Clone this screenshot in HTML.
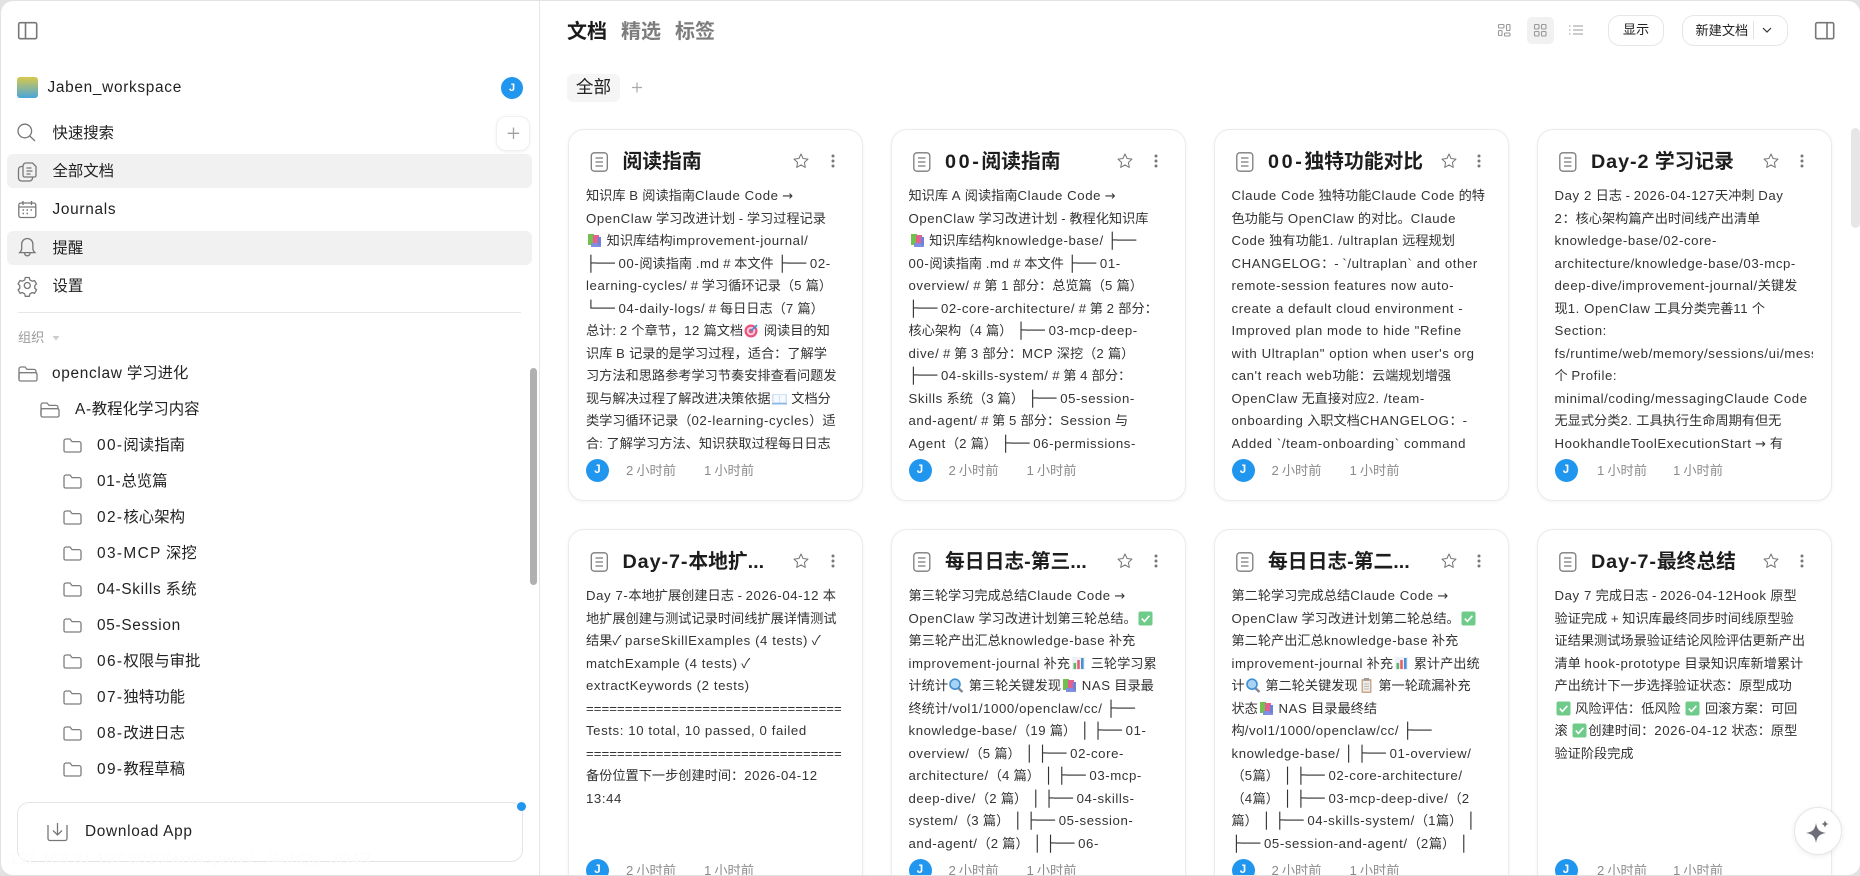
<!DOCTYPE html>
<html lang="zh"><head><meta charset="utf-8"><title>Jaben_workspace</title>
<style>
html,body{margin:0;padding:0;width:1860px;height:876px;overflow:hidden;background:#e2e2e2}
*{box-sizing:border-box}
body{font-family:"Liberation Sans","Noto Sans CJK SC",sans-serif;color:#1f1f1f}
#w{position:absolute;left:1px;top:1px;width:1859px;height:874px;background:#fff;border-radius:12px;overflow:hidden}
.a{position:absolute;white-space:nowrap}
b{font-weight:inherit;letter-spacing:.045em}
b.d{letter-spacing:.09em}
i{font-style:normal;font-family:"Liberation Mono","DejaVu Sans Mono",monospace;font-size:16px}
em{font-style:normal;font-family:"DejaVu Sans",sans-serif;font-size:13px}
.n{left:51.5px;font-size:15.4px;height:24px;line-height:24px;color:#222}
.bg{position:absolute;left:6px;width:525px;background:#f1f1f1;border-radius:6px}
.tr{font-size:15.4px;height:24px;line-height:24px;color:#222}
.tab{top:17px;font-size:20px;font-weight:700;line-height:28px;color:#7d7d7d}
.c{position:absolute;width:295px;height:372px;background:#fff;border:1px solid #ebebeb;border-radius:16px;box-shadow:0 1px 4px rgba(0,0,0,.05)}
.h{position:absolute;left:53.5px;top:18.5px;font-size:19.8px;font-weight:700;line-height:28px;white-space:nowrap;color:#1d1d1d}
.h b.z{letter-spacing:2.6px}
.t{position:absolute;left:17px;top:55.5px;width:258.5px;overflow:hidden;font-size:13.2px;color:#333}
.t p{margin:0;height:22.5px;line-height:22.5px;white-space:nowrap}
.av{position:absolute;left:17px;top:329.5px;width:23px;height:23px;border-radius:50%;background:#2196ee;color:#fff;font-size:11.5px;font-weight:700;text-align:center;line-height:23px}
.m{position:absolute;font-size:13.2px;color:#8c8c8c;line-height:20px;white-space:nowrap;top:331.5px}
.m b{letter-spacing:3px}
.e{display:inline-block;width:17px;height:15px;vertical-align:-3px}
.bt{position:absolute;border:1px solid #e6e6e6;border-radius:12px;background:#fff;font-size:13.2px;text-align:center;color:#222}
</style></head><body>
<svg width="0" height="0" style="position:absolute">
<defs>
<symbol id="books" viewBox="0 0 17 15"><rect x="2" y="1" width="6" height="11" fill="#72c04e"/><rect x="7" y="2" width="6" height="10" fill="#e4608f"/><rect x="5" y="10" width="10" height="4" fill="#7f8ee0"/><rect x="12" y="4" width="3" height="8" fill="#6f80d8"/></symbol>
<symbol id="target" viewBox="0 0 17 15"><circle cx="8" cy="8" r="6.5" fill="#e8557f"/><circle cx="8" cy="8" r="4.3" fill="#f6d0dc"/><circle cx="8" cy="8" r="2.3" fill="#e8557f"/><path d="M8 8L14 2" stroke="#4a90d9" stroke-width="1.6"/></symbol>
<symbol id="obook" viewBox="0 0 17 15"><path d="M1 3h7l.5 1 .5-1h7v10H1z" fill="#cfe2f5"/><path d="M2.5 4h5.5v7H2.5zM9 4h5.5v7H9z" fill="#f6f9fd"/><rect x="1" y="12" width="15" height="1.5" fill="#8ab8e6"/></symbol>
<symbol id="check" viewBox="0 0 17 15"><rect x="1.5" y="0.5" width="14" height="14" rx="2" fill="#6ecb8a"/><path d="M4.8 7.6l2.6 2.8 5-5.6" fill="none" stroke="#fff" stroke-width="1.6"/></symbol>
<symbol id="chart" viewBox="0 0 17 15"><rect x="2" y="1" width="13" height="13" fill="#eef1f5"/><rect x="3.5" y="7" width="2.6" height="6" fill="#5fb56b"/><rect x="7.2" y="4" width="2.6" height="9" fill="#e4606d"/><rect x="11" y="2" width="2.6" height="11" fill="#4a90d9"/></symbol>
<symbol id="mag" viewBox="0 0 17 15"><path d="M9 9l5.5 5" stroke="#7c8791" stroke-width="2.4"/><circle cx="7" cy="6.2" r="5" fill="#a9d3f2" stroke="#3f8fd2" stroke-width="1.6"/></symbol>
<symbol id="clip" viewBox="0 0 17 15"><rect x="3.5" y="1" width="10" height="14" rx="1" fill="#c9a98a"/><rect x="5" y="3" width="7" height="10.5" fill="#f1eee9"/><rect x="6" y="0" width="5" height="2.5" fill="#9a9aa2"/><path d="M6 6h5M6 8.5h5M6 11h5" stroke="#b7b7b7"/></symbol>
<symbol id="fc" viewBox="0 0 19 15"><path d="M1 3a2 2 0 0 1 2-2h4l2 2.6h7a2 2 0 0 1 2 2v6.9a1.5 1.5 0 0 1-1.5 1.5h-14A1.5 1.5 0 0 1 1 12.5z" fill="none" stroke="#7d7d7d" stroke-width="1.3"/></symbol>
<symbol id="fo" viewBox="0 0 20 16"><path d="M1 13V3a2 2 0 0 1 2-2h4l2 2.4h7a2 2 0 0 1 2 2v1" fill="none" stroke="#7d7d7d" stroke-width="1.3"/><path d="M2.5 15h15a1.5 1.5 0 0 0 1.5-1.5V8.2a1.5 1.5 0 0 0-1.5-1.5h-15A1.5 1.5 0 0 0 1 8.2v5.3A1.5 1.5 0 0 0 2.5 15z" fill="none" stroke="#7d7d7d" stroke-width="1.3"/></symbol>
<symbol id="doc" viewBox="0 0 18 20"><rect x=".8" y=".8" width="16" height="18.4" rx="3" fill="none" stroke="#7b7b7b" stroke-width="1.3"/><path d="M5 6h7.500M5 10h7.500M5 14h7.500" stroke="#7b7b7b" stroke-width="1.3"/></symbol>
<symbol id="star" viewBox="0 0 16 16"><path d="M8 1l2.1 4.5 4.9.6-3.6 3.4.9 4.9L8 11.9l-4.3 2.5.9-4.9L1 6.1l4.900-.6z" fill="none" stroke="#757575" stroke-width="1" stroke-linejoin="round"/></symbol>
<symbol id="dots" viewBox="0 0 4 14"><circle cx="2" cy="2" r=".85" fill="#8a8a8a"/><circle cx="2" cy="7" r=".85" fill="#8a8a8a"/><circle cx="2" cy="12" r=".85" fill="#8a8a8a"/></symbol>
</defs></svg>

<div id="w">
<!-- sidebar -->
<div style="position:absolute;left:538px;top:-1px;width:1px;height:876px;background:#e6e6e6"></div>
<div style="position:absolute;left:16px;top:76px;width:21px;height:21px;border-radius:3px;background:linear-gradient(#d8c94a,#49a6dd)"></div>
<div class="a" style="left:46.5px;top:75px;font-size:15.4px;line-height:24px;color:#1f1f1f"><b>Jaben_workspace</b></div>
<div class="av" style="left:500px;top:75.5px;width:22px;height:22px;line-height:22px;font-size:11px">J</div>
<div class="bg" style="top:153px;height:34px"></div>
<div class="bg" style="top:230px;height:33.5px"></div>
<div class="a n" style="top:121px">快速搜索</div>
<div class="a n" style="top:159px">全部文档</div>
<div class="a n" style="top:197px"><b>Journals</b></div>
<div class="a n" style="top:236px">提醒</div>
<div class="a n" style="top:274px">设置</div>
<div style="position:absolute;left:495px;top:115px;width:34px;height:35px;background:#fff;border:1px solid #f0f0f0;border-radius:10px;box-shadow:0 1px 3px rgba(0,0,0,.06)"></div>
<div style="position:absolute;left:17px;top:311px;width:503px;height:1px;background:#e6e6e6"></div>
<div class="a" style="left:17px;top:327px;font-size:13.2px;line-height:20px;color:#9b9b9b">组织</div>
<div class="a tr" style="left:51px;top:361px"><b>openclaw</b> 学习进化</div>
<div class="a tr" style="left:74px;top:397px"><b>A-</b>教程化学习内容</div>
<div class="a tr" style="left:96px;top:433px"><b class="d">00-</b>阅读指南</div>
<div class="a tr" style="left:96px;top:469px"><b>01-</b>总览篇</div>
<div class="a tr" style="left:96px;top:505px"><b class="d">02-</b>核心架构</div>
<div class="a tr" style="left:96px;top:541px"><b class="d">03-MCP</b> 深挖</div>
<div class="a tr" style="left:96px;top:577px"><b>04-Skills</b> 系统</div>
<div class="a tr" style="left:96px;top:613px"><b>05-Session</b></div>
<div class="a tr" style="left:96px;top:649px"><b class="d">06-</b>权限与审批</div>
<div class="a tr" style="left:96px;top:685px"><b class="d">07-</b>独特功能</div>
<div class="a tr" style="left:96px;top:721px"><b class="d">08-</b>改进日志</div>
<div class="a tr" style="left:96px;top:757px"><b class="d">09-</b>教程草稿</div>
<div style="position:absolute;left:529px;top:367px;width:7px;height:217px;background:#b0b0b0;border-radius:4px"></div>
<div style="position:absolute;left:15.5px;top:801px;width:506px;height:60px;background:#fff;border:1px solid #e4e4e4;border-radius:12px"></div>
<div style="position:absolute;left:515.5px;top:800.5px;width:9px;height:9px;background:#2196ee;border-radius:50%"></div>
<div class="a" style="left:84px;top:819px;font-size:15.4px;line-height:24px;color:#222"><b>Download App</b></div>
<div class="a" style="left:8px;top:849px;font-size:16.5px;line-height:18px;color:#fcfcfc">192.168.31.197:3010/workspace/.../4qhQg_JD4R</div>

<!-- header -->
<div class="a tab" style="left:566px;color:#1a1a1a">文档</div>
<div class="a tab" style="left:620px">精选</div>
<div class="a tab" style="left:674px">标签</div>
<div style="position:absolute;left:566px;top:73px;width:53px;height:28px;background:#f5f5f5;border-radius:6px;font-size:17.6px;line-height:27px;text-align:center;color:#222">全部</div>
<div style="position:absolute;left:1526px;top:16px;width:27px;height:27px;background:#f1f1f1;border-radius:5px"></div>
<div class="bt" style="left:1607px;top:14px;width:56px;height:31px;line-height:28px">显示</div>
<div class="bt" style="left:1681px;top:14px;width:106px;height:31px;line-height:30px;text-align:left;padding-left:12.5px">新建文档</div>

<!-- cards row 1 -->
<div class="c" style="left:567px;top:127.5px">
<div class="h">阅读指南</div>
<div class="t" style="height:270px">
<p>知识库 <b>B</b> 阅读指南<b>Claude Code</b> <em>→</em></p>
<p><b>OpenClaw</b> 学习改进计划 - 学习过程记录</p>
<p><svg class="e"><use href="#books"/></svg> 知识库结构<b>improvement-journal/</b></p>
<p><i>├──</i> <b>00-</b>阅读指南 <b>.md</b> # 本文件 <i>├──</i> <b>02-</b></p>
<p><b>learning-cycles/</b> # 学习循环记录（<b>5</b> 篇）</p>
<p><i>└──</i> <b>04-daily-logs/</b> # 每日日志（<b>7</b> 篇）</p>
<p>总计: <b>2</b> 个章节，<b>12</b> 篇文档<svg class="e"><use href="#target"/></svg> 阅读目的知</p>
<p>识库 <b>B</b> 记录的是学习过程，适合：了解学</p>
<p>习方法和思路参考学习节奏安排查看问题发</p>
<p>现与解决过程了解改进决策依据<svg class="e"><use href="#obook"/></svg> 文档分</p>
<p>类学习循环记录（<b>02-learning-cycles</b>）适</p>
<p>合: 了解学习方法、知识获取过程每日日志</p>
</div>
<div class="av">J</div><div class="m" style="left:57px"><b>2</b>小时前</div><div class="m" style="left:135px"><b>1</b>小时前</div>
</div>

<div class="c" style="left:889.5px;top:127.5px">
<div class="h"><b class="z">00-</b>阅读指南</div>
<div class="t" style="height:270px">
<p>知识库 <b>A</b> 阅读指南<b>Claude Code</b> <em>→</em></p>
<p><b>OpenClaw</b> 学习改进计划 - 教程化知识库</p>
<p><svg class="e"><use href="#books"/></svg> 知识库结构<b>knowledge-base/</b> <i>├──</i></p>
<p><b>00-</b>阅读指南 <b>.md</b> # 本文件 <i>├──</i> <b>01-</b></p>
<p><b>overview/</b> # 第 <b>1</b> 部分：总览篇（<b>5</b> 篇）</p>
<p><i>├──</i> <b>02-core-architecture/</b> # 第 <b>2</b> 部分：</p>
<p>核心架构（<b>4</b> 篇） <i>├──</i> <b>03-mcp-deep-</b></p>
<p><b>dive/</b> # 第 <b>3</b> 部分：<b>MCP</b> 深挖（<b>2</b> 篇）</p>
<p><i>├──</i> <b>04-skills-system/</b> # 第 <b>4</b> 部分：</p>
<p><b>Skills</b> 系统（<b>3</b> 篇） <i>├──</i> <b>05-session-</b></p>
<p><b>and-agent/</b> # 第 <b>5</b> 部分：<b>Session</b> 与</p>
<p><b>Agent</b>（<b>2</b> 篇） <i>├──</i> <b>06-permissions-</b></p>
</div>
<div class="av">J</div><div class="m" style="left:57px"><b>2</b>小时前</div><div class="m" style="left:135px"><b>1</b>小时前</div>
</div>

<div class="c" style="left:1212.5px;top:127.5px">
<div class="h"><b class="z">00-</b>独特功能对比</div>
<div class="t" style="height:270px">
<p><b>Claude Code</b> 独特功能<b>Claude Code</b> 的特</p>
<p>色功能与 <b>OpenClaw</b> 的对比。<b>Claude</b></p>
<p><b>Code</b> 独有功能<b>1. /ultraplan</b> 远程规划</p>
<p><b>CHANGELOG</b>：- <b>`/ultraplan` and other</b></p>
<p><b>remote-session features now auto-</b></p>
<p><b>create a default cloud environment -</b></p>
<p><b>Improved plan mode to hide "Refine</b></p>
<p><b>with Ultraplan" option when user's org</b></p>
<p><b>can't reach web</b>功能：云端规划增强</p>
<p><b>OpenClaw</b> 无直接对应<b>2. /team-</b></p>
<p><b>onboarding</b> 入职文档<b>CHANGELOG</b>：-</p>
<p><b>Added `/team-onboarding` command</b></p>
</div>
<div class="av">J</div><div class="m" style="left:57px"><b>2</b>小时前</div><div class="m" style="left:135px"><b>1</b>小时前</div>
</div>

<div class="c" style="left:1535.5px;top:127.5px">
<div class="h"><b>Day-2</b> 学习记录</div>
<div class="t" style="height:270px">
<p><b>Day 2</b> 日志 - <b>2026-04-127</b>天冲刺 <b>Day</b></p>
<p><b>2</b>：核心架构篇产出时间线产出清单</p>
<p><b>knowledge-base/02-core-</b></p>
<p><b>architecture/knowledge-base/03-mcp-</b></p>
<p><b>deep-dive/improvement-journal/</b>关键发</p>
<p>现<b>1. OpenClaw</b> 工具分类完善<b>11</b> 个</p>
<p><b>Section:</b></p>
<p><b>fs/runtime/web/memory/sessions/ui/messaging</b></p>
<p>个 <b>Profile:</b></p>
<p><b>minimal/coding/messagingClaude Code</b></p>
<p>无显式分类<b>2.</b> 工具执行生命周期有但无</p>
<p><b>HookhandleToolExecutionStart</b> <em>→</em> 有</p>
</div>
<div class="av">J</div><div class="m" style="left:59.5px"><b>1</b>小时前</div><div class="m" style="left:135.5px"><b>1</b>小时前</div>
</div>

<!-- cards row 2 -->
<div class="c" style="left:567px;top:527.5px">
<div class="h"><b>Day-7-</b>本地扩...</div>
<div class="t" style="height:270px">
<p><b>Day 7-</b>本地扩展创建日志 - <b>2026-04-12</b> 本</p>
<p>地扩展创建与测试记录时间线扩展详情测试</p>
<p>结果✓ <b>parseSkillExamples (4 tests)</b> ✓</p>
<p><b>matchExample (4 tests)</b> ✓</p>
<p><b>extractKeywords (2 tests)</b></p>
<p style="letter-spacing:.05px">=================================</p>
<p><b>Tests: 10 total, 10 passed, 0 failed</b></p>
<p style="letter-spacing:.05px">=================================</p>
<p>备份位置下一步创建时间：<b>2026-04-12</b></p>
<p><b>13:44</b></p>
</div>
<div class="av">J</div><div class="m" style="left:57px"><b>2</b>小时前</div><div class="m" style="left:135px"><b>1</b>小时前</div>
</div>

<div class="c" style="left:889.5px;top:527.5px">
<div class="h">每日日志-第三...</div>
<div class="t" style="height:270px">
<p>第三轮学习完成总结<b>Claude Code</b> <em>→</em></p>
<p><b>OpenClaw</b> 学习改进计划第三轮总结。<svg class="e"><use href="#check"/></svg></p>
<p>第三轮产出汇总<b>knowledge-base</b> 补充</p>
<p><b>improvement-journal</b> 补充<svg class="e"><use href="#chart"/></svg> 三轮学习累</p>
<p>计统计<svg class="e"><use href="#mag"/></svg> 第三轮关键发现<svg class="e"><use href="#books"/></svg> <b>NAS</b> 目录最</p>
<p>终统计<b>/vol1/1000/openclaw/cc/</b> <i>├──</i></p>
<p><b>knowledge-base/</b>（<b>19</b> 篇） <i>│</i> <i>├──</i> <b>01-</b></p>
<p><b>overview/</b>（<b>5</b> 篇） <i>│</i> <i>├──</i> <b>02-core-</b></p>
<p><b>architecture/</b>（<b>4</b> 篇） <i>│</i> <i>├──</i> <b>03-mcp-</b></p>
<p><b>deep-dive/</b>（<b>2</b> 篇） <i>│</i> <i>├──</i> <b>04-skills-</b></p>
<p><b>system/</b>（<b>3</b> 篇） <i>│</i> <i>├──</i> <b>05-session-</b></p>
<p><b>and-agent/</b>（<b>2</b> 篇） <i>│</i> <i>├──</i> <b>06-</b></p>
</div>
<div class="av">J</div><div class="m" style="left:57px"><b>2</b>小时前</div><div class="m" style="left:135px"><b>1</b>小时前</div>
</div>

<div class="c" style="left:1212.5px;top:527.5px">
<div class="h">每日日志-第二...</div>
<div class="t" style="height:270px">
<p>第二轮学习完成总结<b>Claude Code</b> <em>→</em></p>
<p><b>OpenClaw</b> 学习改进计划第二轮总结。<svg class="e"><use href="#check"/></svg></p>
<p>第二轮产出汇总<b>knowledge-base</b> 补充</p>
<p><b>improvement-journal</b> 补充<svg class="e"><use href="#chart"/></svg> 累计产出统</p>
<p>计<svg class="e"><use href="#mag"/></svg> 第二轮关键发现<svg class="e"><use href="#clip"/></svg> 第一轮疏漏补充</p>
<p>状态<svg class="e"><use href="#books"/></svg> <b>NAS</b> 目录最终结</p>
<p>构<b>/vol1/1000/openclaw/cc/</b> <i>├──</i></p>
<p><b>knowledge-base/</b> <i>│</i> <i>├──</i> <b>01-overview/</b></p>
<p>（<b>5</b>篇） <i>│</i> <i>├──</i> <b>02-core-architecture/</b></p>
<p>（<b>4</b>篇） <i>│</i> <i>├──</i> <b>03-mcp-deep-dive/</b>（<b>2</b></p>
<p>篇） <i>│</i> <i>├──</i> <b>04-skills-system/</b>（<b>1</b>篇） <i>│</i></p>
<p><i>├──</i> <b>05-session-and-agent/</b>（<b>2</b>篇） <i>│</i></p>
</div>
<div class="av">J</div><div class="m" style="left:57px"><b>2</b>小时前</div><div class="m" style="left:135px"><b>1</b>小时前</div>
</div>

<div class="c" style="left:1535.5px;top:527.5px">
<div class="h"><b>Day-7-</b>最终总结</div>
<div class="t" style="height:270px">
<p><b>Day 7</b> 完成日志 - <b>2026-04-12Hook</b> 原型</p>
<p>验证完成 + 知识库最终同步时间线原型验</p>
<p>证结果测试场景验证结论风险评估更新产出</p>
<p>清单 <b>hook-prototype</b> 目录知识库新增累计</p>
<p>产出统计下一步选择验证状态：原型成功</p>
<p><svg class="e"><use href="#check"/></svg> 风险评估：低风险 <svg class="e"><use href="#check"/></svg> 回滚方案：可回</p>
<p>滚 <svg class="e"><use href="#check"/></svg>创建时间：<b>2026-04-12</b> 状态：原型</p>
<p>验证阶段完成</p>
</div>
<div class="av">J</div><div class="m" style="left:59.5px"><b>2</b>小时前</div><div class="m" style="left:135.5px"><b>1</b>小时前</div>
</div>

<div style="position:absolute;left:1850px;top:127px;width:9px;height:100px;background:#e6e6e6;border-radius:5px"></div>
<div style="position:absolute;left:1792.5px;top:806px;width:48px;height:48px;background:#fff;border:1px solid #e6e6e6;border-radius:50%;box-shadow:0 1px 6px rgba(0,0,0,.08)"></div>
</div>

<!-- icon overlay, page coordinates -->
<svg width="1860" height="876" viewBox="0 0 1860 876" style="position:absolute;left:0;top:0" fill="none" stroke="#777" stroke-width="1.3">
<rect x="18.7" y="22.7" width="18" height="16" rx="1.5" stroke-width="1.6"/><path d="M25.5 22.7v16" stroke-width="1.6"/>
<rect x="1815.7" y="22.7" width="18" height="16" rx="1.5" stroke-width="1.6"/><path d="M1827 22.7v16" stroke-width="1.6"/>
<circle cx="24.8" cy="131" r="6.8"/><path d="M29.7 136l5.300 5"/>
<path d="M26 163h6.500l3.500 3.500v9a1.500 1.500 0 0 1-1.500 1.500H24.500a1.500 1.500 0 0 1-1.500-1.500V166a3 3 0 0 1 3-3zM26.500 168h5M26.500 171h6M26.500 174h4"/><path d="M23 166.500h-1.500A3 3 0 0 0 18.500 169.500V178a3 3 0 0 0 3 3h8a3 3 0 0 0 3-3v-1"/>
<rect x="18.800" y="203" width="17" height="14.500" rx="2"/><path d="M18.800 207h17M23 201v4M31.500 201v4"/><path d="M22.500 210h1.500M26.500 210h1.500M30.500 210h1.500M22.500 213.500h1.500M26.500 213.500h1.500" stroke-width="1.600"/>
<path d="M27.300 238.500a5.600 5.600 0 0 0-5.600 5.600v4.500c0 1.600-1 3-2 4h15.200c-1-1-2-2.400-2-4v-4.500a5.600 5.600 0 0 0-5.600-5.600zM24.500 253a2.800 2.800 0 0 0 5.600 0"/>
<circle cx="27.300" cy="285.500" r="3"/><path d="M25.300 277.500h4l.6 2.400 2.300 1.300 2.300-.7 2 3.400-1.700 1.700v2.600l1.700 1.700-2 3.400-2.300-.7-2.300 1.300-.6 2.400h-4l-.6-2.400-2.300-1.300-2.300.7-2-3.400 1.700-1.700v-2.600l-1.700-1.700 2-3.400 2.300.7 2.300-1.300z"/>
<path d="M513.500 127.500v11.500M507.700 133.300h11.500" stroke="#a0a0a0" stroke-width="1.300"/>
<path d="M52.500 336h7l-3.500 4.500z" fill="#cdcdcd" stroke="none"/>
<path d="M637 82.500v10M632 87.500h10" stroke="#a8a8a8" stroke-width="1.200"/>
<use href="#fo" x="18" y="366" width="20" height="16"/><use href="#fo" x="40" y="402" width="20" height="16"/>
<use href="#fc" x="63" y="438" width="19" height="15"/><use href="#fc" x="63" y="474" width="19" height="15"/><use href="#fc" x="63" y="510" width="19" height="15"/><use href="#fc" x="63" y="546" width="19" height="15"/><use href="#fc" x="63" y="582" width="19" height="15"/><use href="#fc" x="63" y="618" width="19" height="15"/><use href="#fc" x="63" y="654" width="19" height="15"/><use href="#fc" x="63" y="690" width="19" height="15"/><use href="#fc" x="63" y="726" width="19" height="15"/><use href="#fc" x="63" y="762" width="19" height="15"/>
<path d="M48 825v13.500a2 2 0 0 0 2 2h15a2 2 0 0 0 2-2V825M57.500 823v11.500M53 830.500l4.500 4.500 4.500-4.500"/>
<g stroke="#999" stroke-width="1.100">
<rect x="1498.500" y="24.500" width="5.500" height="3.500" rx="1"/><rect x="1506.500" y="24.500" width="3.500" height="6" rx="1"/><rect x="1498.500" y="30.500" width="3.500" height="5" rx="1"/><rect x="1504.500" y="33" width="5.500" height="3" rx="1"/>
<rect x="1534.500" y="24.500" width="4.500" height="4.500" rx="1"/><rect x="1541.500" y="24.500" width="4.500" height="4.500" rx="1"/><rect x="1534.500" y="31.500" width="4.500" height="4.500" rx="1"/><rect x="1541.500" y="31.500" width="4.500" height="4.500" rx="1"/>
<path d="M1573 26h10M1573 30h10M1573 34h10M1569 26h1.500M1569 30h1.500M1569 34h1.500"/>
</g>
<path d="M1753.500 21v18" stroke="#e2e2e2" stroke-width="1"/>
<path d="M1763 28l4 4 4-4" stroke="#333" stroke-width="1.200"/>
<g>
<use href="#doc" x="590.500" y="152" width="18" height="20"/><use href="#star" x="793" y="153" width="16" height="16"/><use href="#dots" x="831" y="154" width="4" height="14"/>
<use href="#doc" x="913" y="152" width="18" height="20"/><use href="#star" x="1117" y="153" width="16" height="16"/><use href="#dots" x="1154" y="154" width="4" height="14"/>
<use href="#doc" x="1236" y="152" width="18" height="20"/><use href="#star" x="1441" y="153" width="16" height="16"/><use href="#dots" x="1477" y="154" width="4" height="14"/>
<use href="#doc" x="1559" y="152" width="18" height="20"/><use href="#star" x="1763" y="153" width="16" height="16"/><use href="#dots" x="1800" y="154" width="4" height="14"/>
<use href="#doc" x="590.500" y="552" width="18" height="20"/><use href="#star" x="793" y="553" width="16" height="16"/><use href="#dots" x="831" y="554" width="4" height="14"/>
<use href="#doc" x="913" y="552" width="18" height="20"/><use href="#star" x="1117" y="553" width="16" height="16"/><use href="#dots" x="1154" y="554" width="4" height="14"/>
<use href="#doc" x="1236" y="552" width="18" height="20"/><use href="#star" x="1441" y="553" width="16" height="16"/><use href="#dots" x="1477" y="554" width="4" height="14"/>
<use href="#doc" x="1559" y="552" width="18" height="20"/><use href="#star" x="1763" y="553" width="16" height="16"/><use href="#dots" x="1800" y="554" width="4" height="14"/>
</g>
<path d="M1816 823c1 6.500 3.500 9 10 10-6.500 1-9 3.500-10 10-1-6.500-3.500-9-10-10 6.500-1 9-3.500 10-10z" fill="#6e6e78" stroke="none"/>
<path d="M1825 820c.4 2.600 1.400 3.600 4 4-2.600.4-3.600 1.400-4 4-.4-2.600-1.400-3.600-4-4 2.600-.4 3.600-1.400 4-4z" fill="#6e6e78" stroke="none"/>
</svg>
</body></html>
